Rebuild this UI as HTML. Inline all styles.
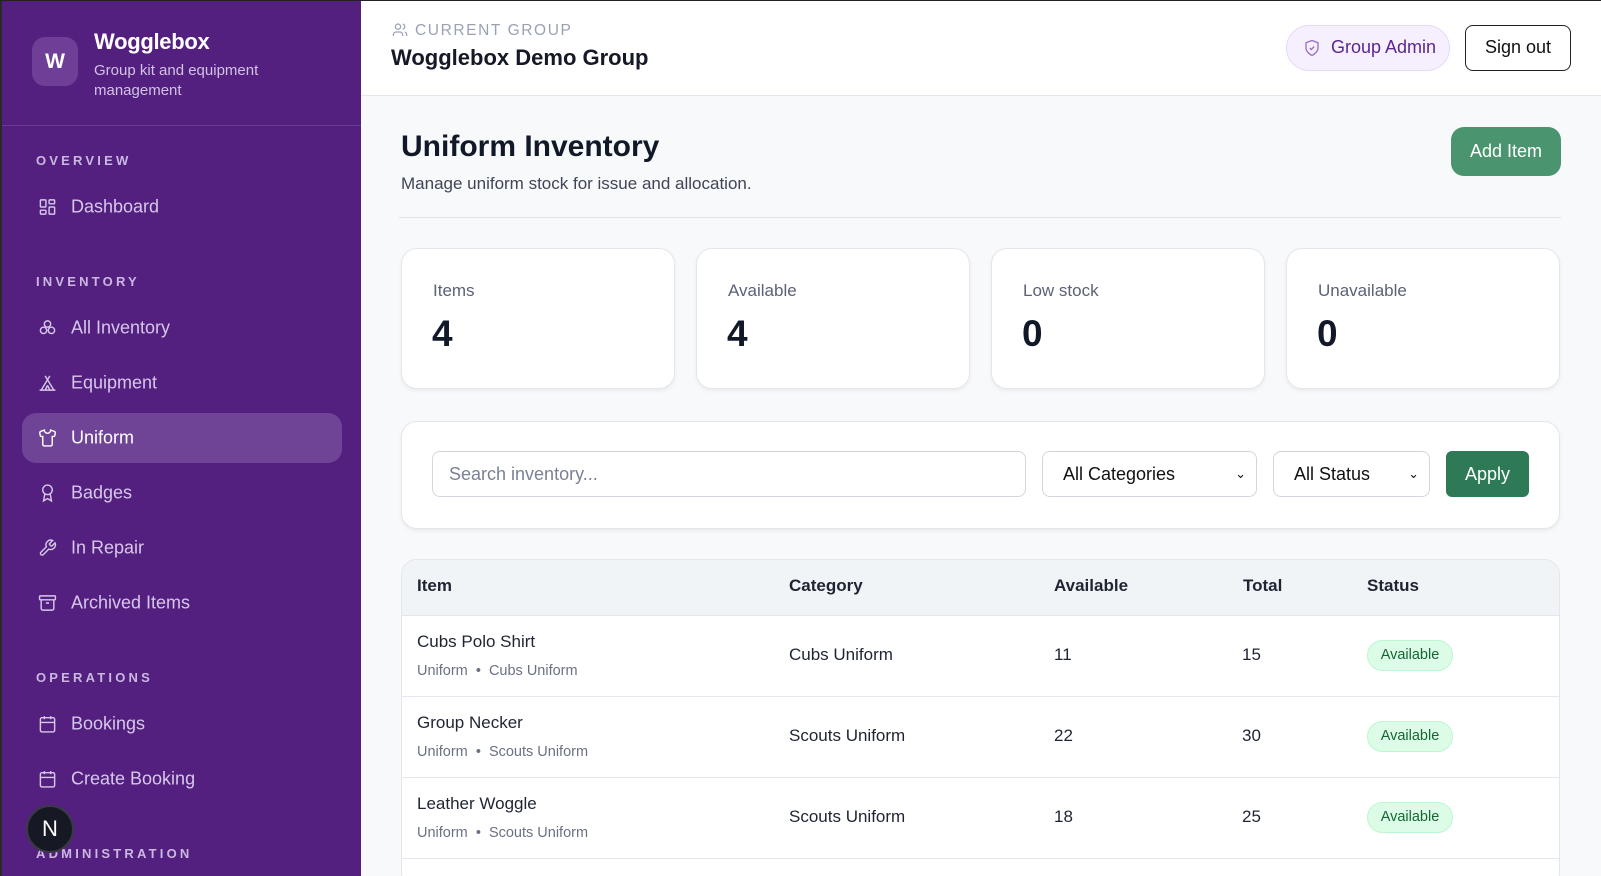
<!DOCTYPE html>
<html><head><meta charset="utf-8">
<style>
*{box-sizing:border-box;margin:0;padding:0}
html{width:1601px;height:876px;overflow:hidden}
body{width:1601px;height:876px;overflow:hidden;font-family:"Liberation Sans",Arial,sans-serif;background:#f8f9fb;position:relative}
.abs{position:absolute}
.topline{position:absolute;left:0;top:0;width:1601px;height:1px;background:#222;z-index:5}
.sb{position:absolute;left:0;top:0;width:361px;height:876px;background:#53207f;border-left:2px solid #2a2a2a}
.sb .t{position:absolute;white-space:nowrap}
.sec{color:#cbb8e0;font-size:13px;font-weight:bold;letter-spacing:3.2px;left:34px}
.nav{color:#d7c7ea;font-size:18px;left:69px;transform:translateY(-50%)}
.ic{position:absolute;left:36px;width:19px;height:19px;transform:translateY(-50%)}
.main-h{position:absolute;left:361px;top:0;width:1240px;height:96px;background:#fff;border-bottom:1px solid #e3e6ec}
.card{position:absolute;background:#fff;border:1px solid #e3e6ec;border-radius:16px;box-shadow:0 2px 4px rgba(0,0,0,.06)}
.lbl{position:absolute;left:31px;top:32px;font-size:17px;color:#5b6275}
.num{position:absolute;left:30px;top:64px;font-size:37px;font-weight:bold;color:#111827}
.inp{position:absolute;top:451px;height:46px;border:1px solid #d3d6de;border-radius:8px;background:#fff;font-size:18px;padding-left:16px;line-height:44px;color:#111}
.th{position:absolute;top:586px;transform:translateY(-50%);font-size:17px;font-weight:bold;color:#1f2433}
.td{position:absolute;font-size:17px;color:#1f2433;transform:translateY(-50%);white-space:nowrap}
.sub{position:absolute;font-size:14.5px;color:#6b7184;transform:translateY(-50%);white-space:nowrap}
.badge{position:absolute;left:1367px;width:86px;height:31px;border-radius:16px;background:#dcfce7;border:1px solid #bbf7d0;color:#166534;font-size:14.5px;text-align:center;line-height:29px}
.rl{position:absolute;left:402px;width:1157px;height:1px;background:#e5e8ee}
</style></head><body>
<div class="topline"></div>
<div class="sb">
  <div class="t" style="left:30px;top:37px;width:46px;height:49px;border-radius:13px;background:#6f3f97;color:#fff;font-weight:bold;font-size:21px;text-align:center;line-height:49px">W</div>
  <div class="t" style="left:92px;top:29px;color:#fff;font-weight:bold;font-size:22px;letter-spacing:-0.3px">Wogglebox</div>
  <div class="t" style="left:92px;top:61px;color:#d2c2e6;font-size:15px;line-height:20px;white-space:normal;width:200px">Group kit and equipment management</div>
  <div class="t" style="left:0;top:125px;width:359px;height:1px;background:#6a3b93"></div>
  <div class="t sec" style="top:153px">OVERVIEW</div>
  <svg class="ic" style="top:207px" viewBox="0 0 24 24" fill="none" stroke="#d7c7ea" stroke-width="1.8"><rect x="3" y="3" width="7" height="9" rx="1"/><rect x="14" y="3" width="7" height="5" rx="1"/><rect x="14" y="12" width="7" height="9" rx="1"/><rect x="3" y="16" width="7" height="5" rx="1"/></svg>
  <div class="t nav" style="top:207px">Dashboard</div>
  <div class="t sec" style="top:274px">INVENTORY</div>
  <svg class="ic" style="top:328px" viewBox="0 0 24 24" fill="none" stroke="#d7c7ea" stroke-width="1.8"><circle cx="12" cy="7" r="4"/><circle cx="7" cy="15" r="4"/><circle cx="17" cy="15" r="4"/></svg>
  <div class="t nav" style="top:328px">All Inventory</div>
  <svg class="ic" style="top:383px" viewBox="0 0 24 24" fill="none" stroke="#d7c7ea" stroke-width="1.8"><path d="M9 3l11 18M15 3L4 21M2 21h20M12 15l-3 6M12 15l3 6"/></svg>
  <div class="t nav" style="top:383px">Equipment</div>
  <div class="t" style="left:20px;top:413px;width:320px;height:50px;border-radius:14px;background:#6f4395"></div>
  <svg class="ic" style="top:438px" viewBox="0 0 24 24" fill="none" stroke="#fff" stroke-width="1.8"><path d="M20.4 3.5L16 2a4 4 0 0 1-8 0L3.6 3.5a2 2 0 0 0-1.3 2.2l.6 3.5a1 1 0 0 0 1 .8H6v10a2 2 0 0 0 2 2h8a2 2 0 0 0 2-2V10h2.2a1 1 0 0 0 1-.8l.6-3.5a2 2 0 0 0-1.3-2.2z"/></svg>
  <div class="t nav" style="top:438px;color:#fff">Uniform</div>
  <svg class="ic" style="top:493px" viewBox="0 0 24 24" fill="none" stroke="#d7c7ea" stroke-width="1.8"><circle cx="12" cy="8" r="6"/><path d="M15.5 13.5L17 22l-5-3-5 3 1.5-8.5"/></svg>
  <div class="t nav" style="top:493px">Badges</div>
  <svg class="ic" style="top:548px" viewBox="0 0 24 24" fill="none" stroke="#d7c7ea" stroke-width="1.8"><path d="M14.7 6.3a1 1 0 0 0 0 1.4l1.6 1.6a1 1 0 0 0 1.4 0l3.8-3.8a6 6 0 0 1-7.9 7.9l-6.9 6.9a2.1 2.1 0 0 1-3-3l6.9-6.9a6 6 0 0 1 7.9-7.9z"/></svg>
  <div class="t nav" style="top:548px">In Repair</div>
  <svg class="ic" style="top:603px" viewBox="0 0 24 24" fill="none" stroke="#d7c7ea" stroke-width="1.8"><rect x="2" y="3" width="20" height="5" rx="1"/><path d="M4 8v11a2 2 0 0 0 2 2h12a2 2 0 0 0 2-2V8M10 12h4"/></svg>
  <div class="t nav" style="top:603px">Archived Items</div>
  <div class="t sec" style="top:670px">OPERATIONS</div>
  <svg class="ic" style="top:724px" viewBox="0 0 24 24" fill="none" stroke="#d7c7ea" stroke-width="1.8"><rect x="3" y="4" width="18" height="18" rx="2"/><path d="M8 2v4M16 2v4M3 10h18M8 14h.01M12 14h.01M16 14h.01M8 18h.01M12 18h.01M16 18h.01"/></svg>
  <div class="t nav" style="top:724px">Bookings</div>
  <svg class="ic" style="top:779px" viewBox="0 0 24 24" fill="none" stroke="#d7c7ea" stroke-width="1.8"><rect x="3" y="4" width="18" height="18" rx="2"/><path d="M8 2v4M16 2v4M3 10h18M8 14h.01M12 14h.01M16 14h.01M8 18h.01M12 18h.01M16 18h.01"/></svg>
  <div class="t nav" style="top:779px">Create Booking</div>
  <div class="t sec" style="top:846px">ADMINISTRATION</div>
  <div class="t" style="left:24px;top:805px;width:48px;height:48px;border-radius:50%;background:#161824;border:2px solid #3a3a44;color:#fff;font-size:22px;text-align:center;line-height:44px">N</div>
</div>

<div class="main-h">
  <svg class="abs" style="left:31px;top:22px;width:16px;height:16px" viewBox="0 0 24 24" fill="none" stroke="#9aa1b5" stroke-width="1.8"><path d="M16 21v-2a4 4 0 0 0-4-4H6a4 4 0 0 0-4 4v2"/><circle cx="9" cy="7" r="4"/><path d="M22 21v-2a4 4 0 0 0-3-3.9M16 3.1a4 4 0 0 1 0 7.8"/></svg>
  <div class="abs" style="left:54px;top:22px;font-size:15.5px;letter-spacing:1.6px;color:#9aa1b5">CURRENT GROUP</div>
  <div class="abs" style="left:30px;top:45px;font-size:22px;font-weight:bold;color:#151826">Wogglebox Demo Group</div>
  <div class="abs" style="left:925px;top:25px;width:164px;height:46px;border-radius:23px;background:#f6f0fe;border:1px solid #e6d9f7"></div>
  <svg class="abs" style="left:942px;top:39px;width:18px;height:18px" viewBox="0 0 24 24" fill="none" stroke="#9c6fc9" stroke-width="1.8"><path d="M12 22s8-4 8-10V5l-8-3-8 3v7c0 6 8 10 8 10z"/><path d="M9 12l2 2 4-4"/></svg>
  <div class="abs" style="left:970px;top:37px;font-size:18px;color:#5b2690">Group Admin</div>
  <div class="abs" style="left:1104px;top:25px;width:106px;height:46px;border-radius:8px;border:1.5px solid #222;background:#fff;font-size:18px;color:#111;text-align:center;line-height:43px">Sign out</div>
</div>

<div class="abs" style="left:401px;top:130px;font-size:30px;font-weight:bold;color:#111827">Uniform Inventory</div>
<div class="abs" style="left:401px;top:174px;font-size:17px;color:#3f4556">Manage uniform stock for issue and allocation.</div>
<div class="abs" style="left:1451px;top:127px;width:110px;height:49px;border-radius:13px;background:#4a9470;color:#fff;font-size:18px;text-align:center;line-height:49px">Add Item</div>
<div class="abs" style="left:399px;top:217px;width:1162px;height:1px;background:#e0e3ea"></div>

<div class="card" style="left:401px;top:248px;width:274px;height:141px"><div class="lbl">Items</div><div class="num">4</div></div>
<div class="card" style="left:696px;top:248px;width:274px;height:141px"><div class="lbl">Available</div><div class="num">4</div></div>
<div class="card" style="left:991px;top:248px;width:274px;height:141px"><div class="lbl">Low stock</div><div class="num">0</div></div>
<div class="card" style="left:1286px;top:248px;width:274px;height:141px"><div class="lbl">Unavailable</div><div class="num">0</div></div>

<div class="card" style="left:401px;top:421px;width:1159px;height:108px"></div>
<div class="inp" style="left:432px;width:594px;color:#7b8194">Search inventory...</div>
<div class="inp" style="left:1042px;width:215px;padding-left:20px">All Categories<span style="position:absolute;right:10px;font-size:13px">&#8964;</span></div>
<div class="inp" style="left:1273px;width:157px;padding-left:20px">All Status<span style="position:absolute;right:10px;font-size:13px">&#8964;</span></div>
<div class="abs" style="left:1446px;top:451px;width:83px;height:46px;border-radius:6px;background:#2f7a56;color:#fff;font-size:18px;text-align:center;line-height:46px">Apply</div>

<div class="card" style="left:401px;top:559px;width:1159px;height:330px;overflow:hidden;box-shadow:none">
  <div style="height:56px;background:#f1f4f7;border-bottom:1px solid #e3e6ec"></div>
</div>
<div class="th" style="left:417px">Item</div>
<div class="th" style="left:789px">Category</div>
<div class="th" style="left:1054px">Available</div>
<div class="th" style="left:1243px">Total</div>
<div class="th" style="left:1367px">Status</div>

<div class="td" style="left:417px;top:642px">Cubs Polo Shirt</div>
<div class="sub" style="left:417px;top:671px">Uniform &nbsp;•&nbsp; Cubs Uniform</div>
<div class="td" style="left:789px;top:655px">Cubs Uniform</div>
<div class="td" style="left:1054px;top:655px">11</div>
<div class="td" style="left:1242px;top:655px">15</div>
<div class="badge" style="top:640px">Available</div>
<div class="rl" style="top:696px"></div>

<div class="td" style="left:417px;top:723px">Group Necker</div>
<div class="sub" style="left:417px;top:752px">Uniform &nbsp;•&nbsp; Scouts Uniform</div>
<div class="td" style="left:789px;top:736px">Scouts Uniform</div>
<div class="td" style="left:1054px;top:736px">22</div>
<div class="td" style="left:1242px;top:736px">30</div>
<div class="badge" style="top:721px">Available</div>
<div class="rl" style="top:777px"></div>

<div class="td" style="left:417px;top:804px">Leather Woggle</div>
<div class="sub" style="left:417px;top:833px">Uniform &nbsp;•&nbsp; Scouts Uniform</div>
<div class="td" style="left:789px;top:817px">Scouts Uniform</div>
<div class="td" style="left:1054px;top:817px">18</div>
<div class="td" style="left:1242px;top:817px">25</div>
<div class="badge" style="top:802px">Available</div>
<div class="rl" style="top:858px"></div>
</body></html>
